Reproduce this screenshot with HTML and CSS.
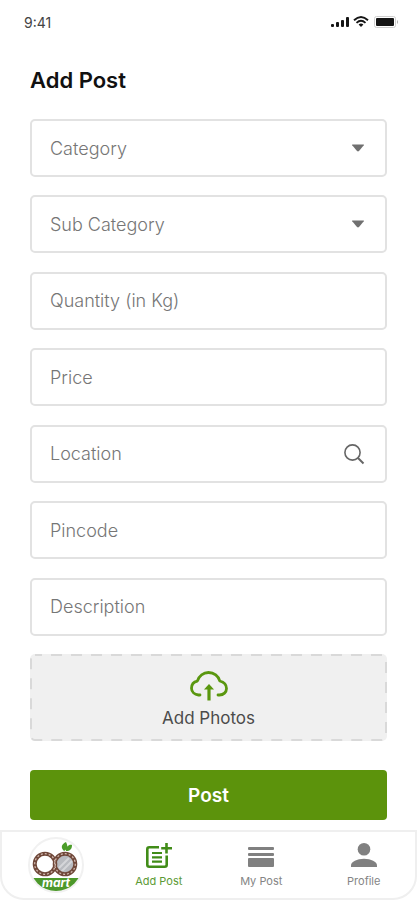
FILE: index.html
```html
<!DOCTYPE html>
<html lang="en">
<head>
<meta charset="utf-8">
<meta name="viewport" content="width=device-width, initial-scale=1">
<title>Add Post</title>
<link rel="stylesheet" href="styles.css">
</head>
<body>
<div class="screen">
  <header class="status">
    <span class="time">9:41</span>
    <svg class="status-icons" width="68" height="14" viewBox="0 0 68 14" aria-hidden="true">
      <g fill="#151515">
        <rect x="0" y="9" width="3" height="3" rx="1"/>
        <rect x="5" y="7" width="3" height="5" rx="1"/>
        <rect x="10" y="5" width="3" height="7" rx="1"/>
        <rect x="15" y="2" width="3" height="10" rx="1"/>
        <path d="M27.600 9.500 Q30 7.600 32.400 9.500 L30 12z"/>
        <rect x="45" y="3" width="18" height="8" rx="1"/>
      </g>
      <g fill="none" stroke="#151515" stroke-width="1.900">
        <path d="M23 5.300 Q30 -1.200 37 5.300"/>
        <path d="M25.500 7.900 Q30 3.800 34.500 7.900"/>
      </g>
      <rect x="43.500" y="1.500" width="21" height="11" rx="2" fill="none" stroke="#cfcfcf"/>
      <path d="M66.500 5.500v3" stroke="#b5b5b5"/>
    </svg>
  </header>

  <main class="content">
    <h1 class="title">Add Post</h1>
    <form class="form">
      <div class="fields">
        <div class="field">
          <select class="control" aria-label="Category"><option>Category</option></select>
          <svg class="caret" width="14" height="8" viewBox="0 0 14 8" aria-hidden="true"><path d="M1.500 .5h11q.8 0 .3.700L8 7.100q-1 .8-2 0L1.200 1.200Q.7.500 1.500.500z" fill="#707070"/></svg>
        </div>
        <div class="field">
          <select class="control" aria-label="Sub Category"><option>Sub Category</option></select>
          <svg class="caret" width="14" height="8" viewBox="0 0 14 8" aria-hidden="true"><path d="M1.500 .5h11q.8 0 .3.700L8 7.100q-1 .8-2 0L1.200 1.200Q.7.500 1.500.500z" fill="#707070"/></svg>
        </div>
        <div class="field"><input class="control" type="text" placeholder="Quantity (in Kg)" aria-label="Quantity (in Kg)"></div>
        <div class="field"><input class="control" type="text" placeholder="Price" aria-label="Price"></div>
        <div class="field">
          <input class="control" type="text" placeholder="Location" aria-label="Location">
          <svg class="search" width="22" height="22" viewBox="0 0 22 22" fill="none" stroke="#666" aria-hidden="true"><circle cx="9.500" cy="9.500" r="7.600" stroke-width="1.600"/><path d="M15 15l5.500 5.500" stroke-width="1.900"/></svg>
        </div>
        <div class="field"><input class="control" type="text" placeholder="Pincode" aria-label="Pincode"></div>
        <div class="field"><input class="control" type="text" placeholder="Description" aria-label="Description"></div>
        <button class="upload" type="button">
          <svg class="dashes" aria-hidden="true"><rect x="1" y="1" rx="4"/></svg>
          <svg width="40" height="32" viewBox="0 0 40 32" fill="none" stroke="#5a970f" stroke-width="2.800" stroke-linecap="round" stroke-linejoin="round" aria-hidden="true">
            <path d="M11 25H9.500C5.500 24.600 2.500 21.800 2.500 18.300C2.500 14.500 5 11.800 8.300 11.100C10 6 14.500 2.500 19.500 2.500C25 2.500 29.500 6 30.800 11C34.800 12 37.500 15 37.500 18.500C37.500 22.200 34.500 25 30.500 25H29"/>
            <path d="M20 30.500V17" stroke-linecap="butt" stroke-width="3.200"/>
            <path d="M20 14l5 5.500H15z" fill="#5a970f" stroke="none"/>
          </svg>
          <span>Add Photos</span>
        </button>
      </div>
      <button class="submit" type="submit">Post</button>
    </form>
  </main>

  <nav class="tabs" aria-label="Main">
    <a class="tab brand" href="#home" aria-label="Home">
      <svg width="56" height="56" viewBox="0 0 56 56" aria-hidden="true">
        <defs><clipPath id="disc"><circle cx="28" cy="28" r="26"/></clipPath></defs>
        <circle cx="28" cy="28" r="27" fill="#fff" stroke="#f1f1f1" stroke-width="2"/>
        <path clip-path="url(#disc)" d="M3 41H53V56H3z" fill="#4c982b"/>
        <circle cx="37" cy="27" r="10" fill="#b9bbc0"/>
        <path d="M31 31l10-10M33 35l11-11" stroke="#d5d6d9" stroke-width="2"/>
        <g fill="none" stroke="#70483a" stroke-width="4">
          <circle cx="17" cy="27" r="10.300"/><circle cx="37" cy="27" r="10.300"/>
        </g>
        <g fill="none" stroke="#d3bcb2" stroke-width="1.200" stroke-dasharray="2 2">
          <circle cx="17" cy="27" r="10.300"/><circle cx="37" cy="27" r="10.300"/>
        </g>
        <path d="M36 14C32 10 34 7 38 5C40 9 40 12 36 14zM38 14C38 10 41 7 44 8C44 12 42 14 38 14z" fill="#4c9d2a"/>
        <text class="logo-text" x="28" y="50" text-anchor="middle">mart</text>
      </svg>
    </a>
    <a class="tab active" href="#add" aria-current="page">
      <svg width="28" height="26" viewBox="0 0 28 26" fill="none" stroke="#418c18" stroke-width="2.600" aria-hidden="true">
        <path d="M14 4.300H4.300Q2.300 4.300 2.300 6.300V21.700Q2.300 23.700 4.300 23.700H19.700Q21.700 23.700 21.700 21.700V12.500"/>
        <path d="M21.500 0V10.500M16.200 5.300H27"/>
        <path d="M7 10H17M7 14.300H17M7 18.600H17" stroke-width="2.200"/>
      </svg>
      <span>Add Post</span>
    </a>
    <a class="tab" href="#mine">
      <svg width="28" height="26" viewBox="0 0 28 26" fill="#808080" aria-hidden="true"><rect x="1" y="4" width="26" height="3" rx="1"/><rect x="1" y="10" width="26" height="3" rx="1"/><rect x="1" y="15" width="26" height="9" rx="1"/></svg>
      <span>My Post</span>
    </a>
    <a class="tab" href="#profile">
      <svg width="28" height="26" viewBox="0 0 28 26" fill="#808080" aria-hidden="true"><circle cx="14" cy="6.300" r="6.300"/><path d="M1 24V22.500C1 18.800 7 15.800 14 15.800S27 18.800 27 22.500V24z"/></svg>
      <span>Profile</span>
    </a>
  </nav>
</div>
</body>
</html>
```
FILE: styles.css
```css
* {
  box-sizing: border-box;
}

body {
  margin: 0;
  background: #fff;
  font-family: Inter, "Liberation Sans", sans-serif;
}

button,
input,
select {
  font: inherit;
}

.screen {
  display: flex;
  flex-direction: column;
  min-height: 100vh;
}

.status {
  display: flex;
  align-items: center;
  justify-content: space-between;
  height: 44px;
  padding: 0 18px 0 24px;
}

.time {
  font-size: 14px;
  color: #444;
}

.content {
  flex: 1;
  display: flex;
  flex-direction: column;
  padding: 20px 30px 10px;
}

.title {
  margin: 0 0 23px;
  font-size: 22px;
  line-height: 32px;
  font-weight: 600;
  color: #111;
}

.form {
  flex: 1;
  display: flex;
  flex-direction: column;
  gap: 29px;
}

.fields {
  flex: 1;
  display: flex;
  flex-direction: column;
  justify-content: space-between;
  gap: 12px;
}

.field {
  position: relative;
}

.control {
  display: block;
  width: 100%;
  height: 58px;
  padding: 0 18px;
  border: 2px solid #e2e2e2;
  border-radius: 5px;
  background: #fff;
  appearance: none;
  font-size: 18px;
  font-weight: 300;
  color: #767676;
}

.control::placeholder {
  color: #767676;
  opacity: 1;
}

.caret,
.search {
  position: absolute;
  top: 0;
  right: 22px;
  bottom: 0;
  margin: auto 0;
  pointer-events: none;
}

.upload {
  position: relative;
  display: flex;
  flex-direction: column;
  align-items: center;
  justify-content: center;
  gap: 4px;
  height: 87px;
  padding: 6px 0 0;
  border: 0;
  border-radius: 5px;
  background: #f0f0f0;
  font-size: 17px;
  line-height: 24px;
  color: #4b4b4b;
}

.dashes {
  position: absolute;
  inset: 0;
  width: 100%;
  height: 100%;
}

.dashes rect {
  width: calc(100% - 2px);
  height: calc(100% - 2px);
  fill: none;
  stroke: #d9d9d9;
  stroke-width: 2px;
  stroke-dasharray: 11px 9px;
  stroke-dashoffset: 4px;
}

.submit {
  height: 50px;
  border: 0;
  border-radius: 4px;
  background: #5c930c;
  font-size: 19px;
  font-weight: 600;
  color: #fff;
}

.tabs {
  display: grid;
  grid-template-columns: repeat(4, 1fr);
  height: 70px;
  padding-left: 3px;
  border: 2px solid #efefef;
  border-radius: 0 0 24px 24px;
}

.tab {
  display: flex;
  flex-direction: column;
  align-items: center;
  justify-content: center;
  gap: 5px;
  font-size: 11px;
  line-height: 14px;
  color: #858585;
  text-decoration: none;
}

.active {
  color: #5c9a35;
}

.logo-text {
  font-family: Inter, sans-serif;
  font-size: 12px;
  font-style: italic;
  font-weight: 700;
  fill: #fff;
}
```
